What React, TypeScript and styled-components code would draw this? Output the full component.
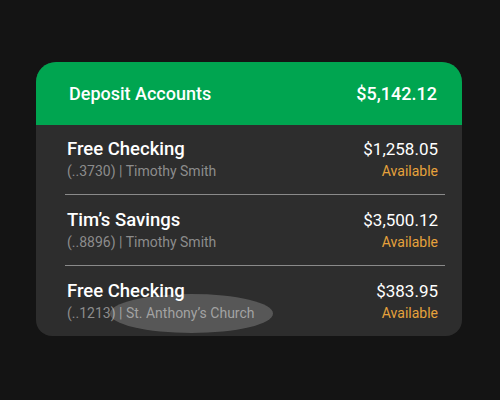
import React from "react"
import styled, { createGlobalStyle } from "styled-components"

const GlobalStyle = createGlobalStyle`
  html, body {
    margin: 0;
    padding: 0;
    background: #141414;
    font-family: Roboto, "Liberation Sans", sans-serif;
  }
`

const Page = styled.div`
  width: 500px;
  height: 400px;
  display: flex;
  align-items: flex-start;
  padding: 62px 0 0 36px;
  box-sizing: border-box;
`

const Card = styled.div`
  position: relative;
  width: 426px;
  height: 274px;
  background: #2d2d2d;
  border-radius: 20px 20px 16px 16px;
  overflow: hidden;
  display: flex;
  flex-direction: column;
`

const Header = styled.div`
  height: 63px;
  flex-shrink: 0;
  background: #00a550;
  display: flex;
  align-items: center;
  justify-content: space-between;
  padding: 0 25px 0 33px;
  color: #fff;
  font-size: 18px;
  font-weight: 500;
`

const List = styled.div`
  padding: 0 17px 0 29px;
`

const Row = styled.div`
  display: flex;
  justify-content: space-between;
  padding: 14px 7px 12px 2px;
  border-bottom: 1px solid #8a8a8a;

  &:first-child {
    padding-top: 13px;
  }

  &:last-child {
    border-bottom: none;
  }
`

const Col = styled.div<{ $align?: "left" | "right" }>`
  display: flex;
  flex-direction: column;
  align-items: ${({ $align }) => ($align === "right" ? "flex-end" : "flex-start")};
`

const Title = styled.div`
  color: #fff;
  font-size: 18.5px;
  font-weight: 500;
  line-height: 22px;
`

const Sub = styled.div`
  color: #8c8c8c;
  font-size: 14px;
  line-height: 22px;
`

const Amount = styled.div`
  color: #fff;
  font-size: 17px;
  line-height: 22px;
`

const Status = styled.div`
  color: #e6a23c;
  font-size: 14px;
  line-height: 22px;
`

// touch highlight sitting over the last row
const Highlight = styled.div`
  position: absolute;
  left: 74px;
  top: 232px;
  width: 163px;
  height: 39px;
  border-radius: 50%;
  background: rgba(255, 255, 255, 0.2);
  pointer-events: none;
`

const accounts = [
  { name: "Free Checking", number: "3730", owner: "Timothy Smith", balance: "$1,258.05" },
  { name: "Tim\u2019s Savings", number: "8896", owner: "Timothy Smith", balance: "$3,500.12" },
  { name: "Free Checking", number: "1213", owner: "St. Anthony\u2019s Church", balance: "$383.95" },
]

export default function App() {
  return (
    <>
      <GlobalStyle />
      <Page>
        <Card>
          <Header>
            <span>Deposit Accounts</span>
            <span>$5,142.12</span>
          </Header>
          <List>
            {accounts.map((a, i) => (
              <Row key={i}>
                <Col>
                  <Title>{a.name}</Title>
                  <Sub>
                    (..{a.number}) | {a.owner}
                  </Sub>
                </Col>
                <Col $align="right">
                  <Amount>{a.balance}</Amount>
                  <Status>Available</Status>
                </Col>
              </Row>
            ))}
          </List>
          <Highlight />
        </Card>
      </Page>
    </>
  )
}
